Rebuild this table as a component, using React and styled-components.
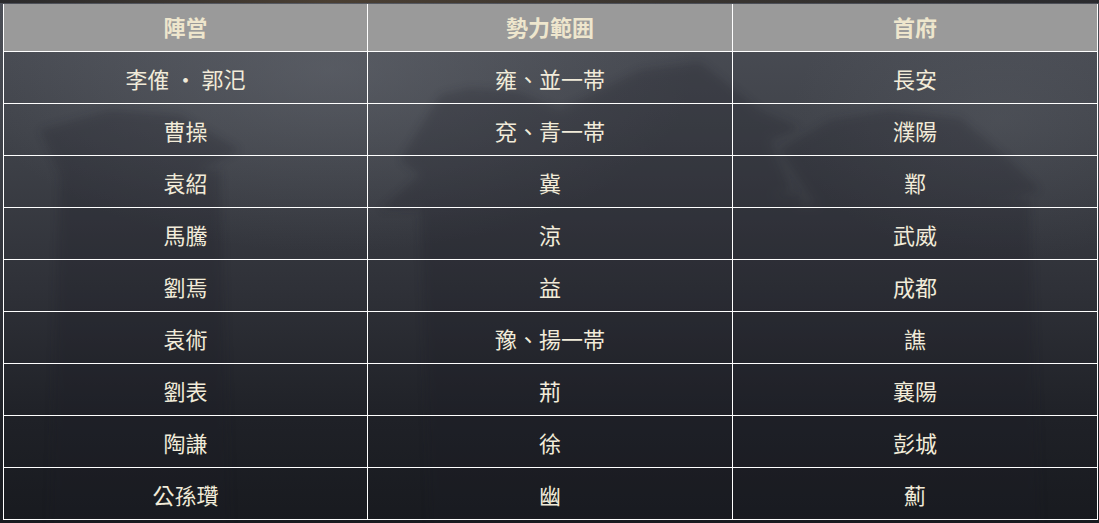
import styled, { createGlobalStyle } from "styled-components";

const GlobalStyle = createGlobalStyle`
  html, body {
    margin: 0;
    padding: 0;
    background: #24262c;
  }
  body {
    font-family: "Noto Sans CJK TC", "Noto Sans CJK SC", "Noto Sans", sans-serif;
  }
`;

const Page = styled.div`
  position: relative;
  width: 1099px;
  height: 523px;
  overflow: hidden;
  box-sizing: border-box;
  padding: 4px 0 0 3px;
  background:
    radial-gradient(ellipse 520px 260px at 330px 70px, rgba(120, 124, 132, 0.35), rgba(120, 124, 132, 0) 70%),
    radial-gradient(ellipse 300px 200px at 1000px 120px, rgba(110, 114, 122, 0.22), rgba(110, 114, 122, 0) 70%),
    linear-gradient(180deg, #4c4f57 0%, #40434a 25%, #2f3138 55%, #1f2127 80%, #181a1f 100%);
`;

const TopStrip = styled.div`
  position: absolute;
  left: 0;
  top: 0;
  width: 100%;
  height: 3px;
  background: linear-gradient(90deg, #2a2a2c 0%, #4a3f33 30%, #3a3530 60%, #2a2b2f 100%);
`;

const Backdrop = styled.svg`
  position: absolute;
  inset: 0;
  width: 100%;
  height: 100%;
  pointer-events: none;
`;

const Grid = styled.div`
  position: relative;
  display: grid;
  grid-template-columns: 364px 365px 365px;
  width: 1095px;
  box-sizing: border-box;
  border-left: 1px solid #ffffff;
`;

const Cell = styled.div`
  box-sizing: border-box;
  display: flex;
  align-items: center;
  justify-content: center;
  height: ${(p) => (p.$head ? "48px" : "52px")};
  border-right: 1px solid #ffffff;
  border-bottom: 1px solid #ffffff;
  background: ${(p) => (p.$head ? "#9a9a9a" : "transparent")};
  color: ${(p) => (p.$head ? "#eee6cd" : "#f1ebd9")};
  font-size: 22px;
  font-weight: ${(p) => (p.$head ? 700 : 400)};
  padding: ${(p) => (p.$head ? "0 0 3px" : "1px 0 0")};
  white-space: nowrap;
`;

const headers = ["陣営", "勢力範囲", "首府"];

const rows = [
  ["李傕 · 郭汜", "雍、並一帯", "長安"],
  ["曹操", "兗、青一帯", "濮陽"],
  ["袁紹", "冀", "鄴"],
  ["馬騰", "涼", "武威"],
  ["劉焉", "益", "成都"],
  ["袁術", "豫、揚一帯", "譙"],
  ["劉表", "荊", "襄陽"],
  ["陶謙", "徐", "彭城"],
  ["公孫瓚", "幽", "薊"],
];

const App = () => {
  return (
    <>
      <GlobalStyle />
      <Page>
        <TopStrip />
        {/* ぼんやりした城門のシルエット */}
        <Backdrop viewBox="0 0 1099 523" preserveAspectRatio="none">
          <defs>
            <filter id="soft" x="-10%" y="-10%" width="120%" height="120%">
              <feGaussianBlur stdDeviation="4" />
            </filter>
          </defs>
          <g filter="url(#soft)" fill="#1d1f25" opacity="0.22">
            <path d="M440 95 L470 88 L520 92 L560 110 L640 70 L700 62 L760 110 L800 128 L770 140 L790 190 L760 200 L380 210 L420 175 L400 160 Z" />
            <path d="M420 200 L800 195 L800 523 L430 523 Z" />
            <path d="M780 150 L830 120 L890 110 L960 118 L1010 160 L1040 190 L1010 200 L820 210 Z" />
            <path d="M800 205 L1030 200 L1040 523 L800 523 Z" />
            <path d="M40 130 L110 110 L180 115 L240 150 L200 170 L60 175 Z" />
            <path d="M60 170 L220 170 L230 523 L50 523 Z" />
          </g>
        </Backdrop>
        <Grid>
          {headers.map((h) => (
            <Cell key={h} $head>
              {h}
            </Cell>
          ))}
          {rows.map((row, i) =>
            row.map((text, j) => <Cell key={`${i}-${j}`}>{text}</Cell>)
          )}
        </Grid>
      </Page>
    </>
  );
};

export default App;
